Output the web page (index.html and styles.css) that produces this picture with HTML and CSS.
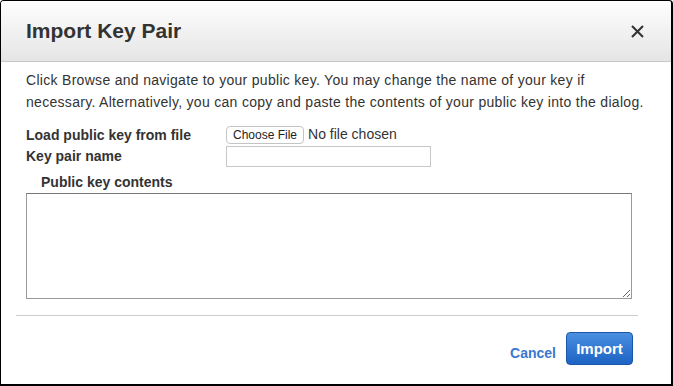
FILE: index.html
```html
<!DOCTYPE html>
<html>
    <head>
        <title>Import Key Pair</title>
        <meta charset="utf-8" />
        <meta name="viewport" content="width=device-width, initial-scale=1.0">
        <link rel="stylesheet" href="styles.css">
    </head>
    <body>
        <div class="dialog">
            <div class="dialog-header">
                <h2>Import Key Pair</h2>
                <button type="button" class="close-btn" aria-label="Close">
                    <svg width="13" height="13" viewBox="0 0 13 13">
                        <path d="M1 1 L12 12 M12 1 L1 12" stroke="#333" stroke-width="2.1" fill="none"/>
                    </svg>
                </button>
            </div>
            <form class="dialog-body">
                <p class="intro">Click Browse and navigate to your public key. You may change the name of your key if necessary. Alternatively, you can copy and paste the contents of your public key into the dialog.</p>
                <div class="input-row file-row">
                    <label for="keyfile">Load public key from file</label>
                    <input type="file" id="keyfile" name="keyfile">
                </div>
                <div class="input-row name-row">
                    <label for="keyname">Key pair name</label>
                    <input type="text" id="keyname" name="keyname">
                </div>
                <label class="contents-label" for="contents">Public key contents</label>
                <textarea id="contents" name="contents"></textarea>
            </form>
            <div class="dialog-footer">
                <a href="#" class="cancel-link">Cancel</a>
                <button type="button" class="import-btn">Import</button>
            </div>
        </div>
    </body>
</html>
```

FILE: styles.css
```css
body {
    margin: 0;
    font-family: "Liberation Sans", Arial, sans-serif;
    color: #333;
}

.dialog {
    width: 673px;
    height: 386px;
    box-sizing: border-box;
    border: 1px solid #000;
    border-right-width: 2px;
    border-bottom-width: 2px;
    border-radius: 4px 4px 0 0;
    background: #fff;
    overflow: hidden;
}

.dialog-header {
    height: 60px;
    display: flex;
    align-items: center;
    justify-content: space-between;
    padding: 0 27px 0 25px;
    background: linear-gradient(#fefefe, #e5e5e5);
    border-bottom: 1px solid #c8c8c8;
}

.dialog-header h2 {
    margin: 0;
    font-size: 21px;
    font-weight: bold;
    color: #333;
}

.close-btn {
    border: 0 none transparent;
    background: transparent;
    padding: 0;
    display: flex;
    cursor: pointer;
}

.dialog-body {
    padding: 7px 25px 0 25px;
    font-size: 14px;
}

.intro {
    margin: 0 0 12px 0;
    line-height: 22px;
    letter-spacing: 0.3px;
}

.input-row {
    display: flex;
    align-items: center;
}

.input-row label {
    width: 200px;
    font-weight: bold;
}

.file-row {
    height: 19px;
}

.file-row input {
    font-family: inherit;
    font-size: 14px;
    color: #333;
}

.file-row input::file-selector-button {
    font-family: inherit;
    font-size: 12px;
    color: #222;
    background: #fff;
    border: 1px solid #c4c4c4;
    border-radius: 4px;
    padding: 1px 6px;
    margin-right: 4px;
}

.name-row {
    height: 22px;
    margin-top: 1px;
}

.name-row input {
    width: 205px;
    height: 21px;
    box-sizing: border-box;
    border: 1px solid #c8c8c8;
    padding: 2px 4px;
}

.contents-label {
    display: block;
    font-weight: bold;
    margin: 6px 0 0 15px;
    line-height: 19px;
}

.dialog-body textarea {
    display: block;
    width: 606px;
    height: 106px;
    box-sizing: border-box;
    margin-top: 1px;
    border: 1px solid #999;
    border-top-color: #777;
    border-radius: 0;
    font-family: "Liberation Mono", monospace;
}

.dialog-footer {
    margin: 16px 33px 0 15px;
    border-top: 1px solid #cdcdcd;
    padding: 16px 5px 0 0;
    display: flex;
    justify-content: flex-end;
    align-items: center;
}

.cancel-link {
    color: #3a78cf;
    font-size: 14px;
    font-weight: bold;
    text-decoration: none;
    margin: 8px 10px 0 0;
}

.import-btn {
    width: 67px;
    height: 33px;
    border: 1px solid #1b58a8;
    border-radius: 4px;
    background: linear-gradient(#4a8fe0, #1c63c4);
    color: #fff;
    font-family: inherit;
    font-size: 15px;
    font-weight: bold;
    cursor: pointer;
}
```
